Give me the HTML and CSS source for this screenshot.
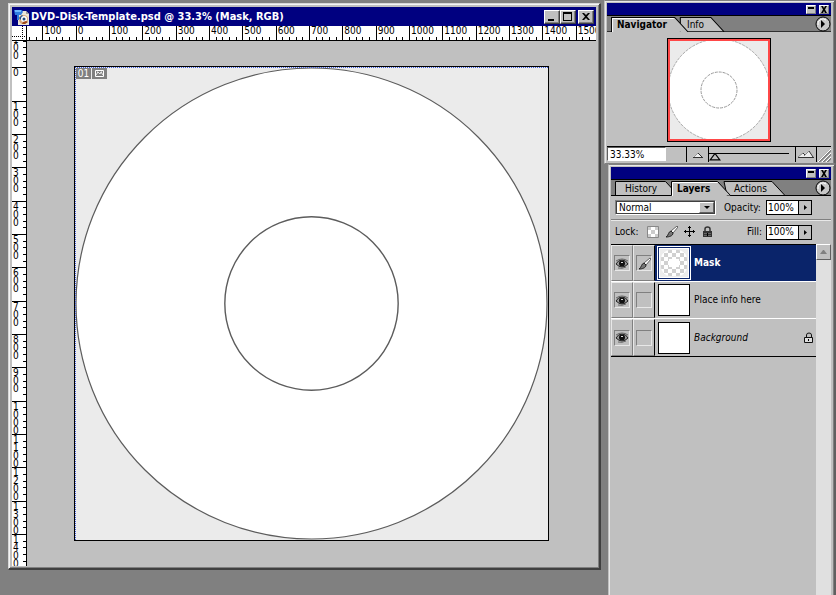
FILE: index.html
```html
<!DOCTYPE html>
<html lang="en">
<head>
<meta charset="utf-8">
<title>DVD-Disk-Template.psd</title>
<link rel="stylesheet" href="styles.css">
</head>
<body>
<main class="desktop">
  <section class="doc">
    <header class="titlebar">
      <svg class="app-icon" width="16" height="16" viewBox="0 0 16 16" aria-hidden="true">
        <path d="M4 2h8l3 3v11H4z" fill="#e8e4d8"/><path d="M12 2v3h3z" fill="#9a9a9a"/>
        <path d="M0 1h8l1 2-2 3H5v5H3V6H1z" fill="#2f7de0"/><path d="M1 1h6v2H1z" fill="#70b8ff"/>
        <path d="M5 10q0-4 4-4 5 0 5 4 0 5-5 5-4 0-4-5z" fill="#d8a878"/><path d="M5 9l3-3 2 2-3 3z" fill="#205090"/><circle cx="10" cy="10" r="3" fill="#fff"/><circle cx="10" cy="10" r="1.500" fill="#204878"/><path d="M12 12l2 1-3 2H8l1-2z" fill="#a04818"/>
      </svg>
      <h1>DVD-Disk-Template.psd @ 33.3% (Mask, RGB)</h1>
      <div class="win-buttons">
        <button type="button" aria-label="Minimize"><svg width="12" height="10" viewBox="0 0 12 10"><path d="M2 7h6v2H2z"/></svg></button>
        <button type="button" aria-label="Maximize"><svg width="12" height="10" viewBox="0 0 12 10"><path fill-rule="evenodd" d="M1 0h9v9H1zM2 2v6h7V2z"/></svg></button>
        <button type="button" class="close" aria-label="Close"><svg width="12" height="10" viewBox="0 0 12 10"><path d="M2 1h2l2 2 2-2h2L7 4.500l3 3.500H8L6 6 4 8H2l3-3.500z"/></svg></button>
      </div>
    </header>
    <div class="workspace">
      <div class="corner"></div>
      <div class="ruler ruler-h"><div class="scale" data-first="-200" data-last="1500"></div></div>
      <div class="ruler ruler-v"><div class="scale" data-first="-100" data-last="1400"></div></div>
      <div class="stage">
        <div class="canvas">
          <svg class="disc" viewBox="0 0 472 472" role="img" aria-label="Disc template">
            <circle cx="236" cy="236" r="235" fill="#fff" stroke="#5c5c5c" stroke-width="1.200"/>
            <circle cx="236" cy="236" r="86.500" fill="#fff" stroke="#5c5c5c" stroke-width="1.400"/>
          </svg>
          <div class="slice"><span>01</span><span><svg width="11" height="9" viewBox="0 0 11 9"><path d="M1.500 1.500h8v6h-8z" fill="none" stroke="#fff"/><path d="M2 6l2-3 2 2 1-2 2 3M3 3h1M7 3h1" fill="none" stroke="#fff" stroke-width=".8"/></svg></span></div>
        </div>
      </div>
    </div>
  </section>

  <aside class="panels">
    <section class="panel navigator">
      <header class="palette-bar">
        <button type="button" aria-label="Minimize navigator"><svg width="8" height="7" viewBox="0 0 8 7"><path d="M1 1h6v2H1z"/></svg></button>
        <button type="button" aria-label="Close navigator"><svg width="8" height="7" viewBox="0 0 8 7"><path d="M1 0h2l1 2 1-2h2L5 3.500 7 7H5L4 5 3 7H1l2-3.500z"/></svg></button>
      </header>
      <nav class="tabs">
        <svg class="tab-art" height="16" viewBox="0 0 220 16" preserveAspectRatio="xMinYMin slice" aria-hidden="true"><path d="M72 15.500V1.500h30l13 14" fill="#c0c0c0" stroke="#000"/><path d="M0 15.500h4.500v-14h62l13 14" fill="#c0c0c0"/><path d="M0 15.500h4.500v-14h62l13 14H230" fill="none" stroke="#000"/><path d="M5.500 16V2.500h60" fill="none" stroke="#fff"/></svg>
        <button type="button" class="tab active t-nav">Navigator</button>
        <button type="button" class="tab t-info">Info</button>
        <button type="button" class="more" aria-label="Navigator menu"><svg width="16" height="16" viewBox="0 0 16 16"><circle cx="8" cy="8" r="7" fill="#c8c8c8" stroke="#000"/><path d="M3 9a5 5 0 0 1 8-5" stroke="#fff" fill="none"/><path d="M6 4l4 4-4 4z"/></svg></button>
      </nav>
      <div class="preview">
        <svg width="104" height="104" viewBox="0 0 104 104" role="img" aria-label="Navigator preview"><path d="M0 0h104v104H0z" fill="#000"/><path d="M1 1h102v102H1z" fill="#ff4848"/><svg x="3" y="3" width="98" height="98" viewBox="0 0 98 98"><path d="M0 0h98v98H0z" fill="#ebebeb"/><circle cx="49" cy="49" r="51" fill="#fff" stroke="#aaa" stroke-dasharray="3 1"/><circle cx="49" cy="49" r="18" fill="none" stroke="#999" stroke-dasharray="3 1"/></svg></svg>
      </div>
      <footer class="zoom-row">
        <input class="zoom-value" type="text" value="33.33%" aria-label="Zoom">
        <button type="button" class="zoom-out" aria-label="Zoom out"><svg width="12" height="8" viewBox="0 0 12 8"><path d="M1 6l3-2 2-2 4 4z" fill="#eee"/><path d="M1 6.500h10M6 2l4 4" fill="none" stroke="#333"/><path d="M2 6l2-2 2-2" fill="none" stroke="#999"/></svg></button>
        <label class="slider"><input type="range" min="0" max="100" value="0" aria-label="Zoom level"></label>
        <button type="button" class="zoom-in" aria-label="Zoom in"><svg width="18" height="10" viewBox="0 0 18 10"><path d="M1 7l5-4 2 1 4-3 4 6z" fill="#eee"/><path d="M1 7.500h16M12 1l4 6M6 3l2 2" fill="none" stroke="#333"/><path d="M1 7l5-4M7 6l5-5" fill="none" stroke="#888"/></svg></button>
        <svg class="grip" width="13" height="13" viewBox="0 0 13 13" aria-hidden="true"><path d="M1 13L13 1M5 13l8-8M9 13l4-4" stroke="#808080" stroke-width="2"/><path d="M0 13L13 0M4 13l9-9M8 13l5-5" stroke="#fff"/></svg>
      </footer>
    </section>

    <section class="panel layers">
      <header class="palette-bar">
        <button type="button" aria-label="Minimize layers"><svg width="8" height="7" viewBox="0 0 8 7"><path d="M1 1h6v2H1z"/></svg></button>
        <button type="button" aria-label="Close layers"><svg width="8" height="7" viewBox="0 0 8 7"><path d="M1 0h2l1 2 1-2h2L5 3.500 7 7H5L4 5 3 7H1l2-3.500z"/></svg></button>
      </header>
      <nav class="tabs">
        <svg class="tab-art" height="16" viewBox="0 0 220 16" preserveAspectRatio="xMinYMin slice" aria-hidden="true"><path d="M4.500 15.500V1.500h50l13 14M113 1.500h48l13 14H116z" fill="#c0c0c0" stroke="#000"/><path d="M60.500 16V1.500h46l13 14z" fill="#c0c0c0"/><path d="M0 15.500h60.500v-14h46l13 14H230" fill="none" stroke="#000"/><path d="M61.500 16V2.500h45" fill="none" stroke="#fff"/></svg>
        <button type="button" class="tab t-history">History</button>
        <button type="button" class="tab active t-layers">Layers</button>
        <button type="button" class="tab t-actions">Actions</button>
        <button type="button" class="more" aria-label="Layers menu"><svg width="16" height="16" viewBox="0 0 16 16"><circle cx="8" cy="8" r="7" fill="#c8c8c8" stroke="#000"/><path d="M3 9a5 5 0 0 1 8-5" stroke="#fff" fill="none"/><path d="M6 4l4 4-4 4z"/></svg></button>
      </nav>
      <div class="options blend">
        <div class="select-box"><select aria-label="Blend mode"><option>Normal</option></select><span class="drop"></span></div>
        <label for="opacity">Opacity:</label>
        <div class="percent"><input id="opacity" type="text" value="100%"><button type="button" aria-label="Opacity slider"><svg width="3" height="5" viewBox="0 0 3 5"><path d="M0 0l3 2.500L0 5z"/></svg></button></div>
      </div>
      <div class="options lock">
        <span class="lock-label">Lock:</span>
        <button type="button" class="tool" aria-label="Lock transparency"><svg width="12" height="12" viewBox="0 0 12 12"><path d="M0 0h11v11H0z" fill="#fff"/><path d="M0 0h4v4H0zM8 0h3v4H8zM4 4h4v4H4zM0 8h4v3H0zM8 8h3v3H8z" fill="#ccc"/><path d="M.5 11.500V.500h11v11z" stroke="#888" fill="none"/></svg></button>
        <button type="button" class="tool" aria-label="Lock pixels"><svg width="13" height="12" viewBox="0 0 13 12"><path d="M12 0L6 5l2 2 5-6z" fill="#fff" stroke="#444" stroke-width=".8"/><path d="M6 5l2 2c0 3-4 4-7 4 3-2 2-5 5-6z" fill="#777" stroke="#222"/></svg></button>
        <button type="button" class="tool" aria-label="Lock position"><svg width="12" height="12" viewBox="0 0 12 12"><path d="M5.500 0v11M0 5.500h11M4 2l1.500-1.500L7 2M4 9l1.500 1.500L7 9M2 4L.5 5.500 2 7M9 4l1.500 1.500L9 7" stroke="#000" fill="none"/></svg></button>
        <button type="button" class="tool" aria-label="Lock all"><svg width="11" height="12" viewBox="0 0 11 12"><path d="M3 5V3q0-2 2.500-2T8 3v2" fill="none" stroke="#333" stroke-width="1.500"/><path d="M1 5h9v6H1z" fill="#333"/><path d="M2 7.500h7M2 9.500h7" stroke="#666"/><path d="M5 7h1v3H5z"/></svg></button>
        <label class="fill-label" for="fill">Fill:</label>
        <div class="percent"><input id="fill" type="text" value="100%"><button type="button" aria-label="Fill slider"><svg width="3" height="5" viewBox="0 0 3 5"><path d="M0 0l3 2.500L0 5z"/></svg></button></div>
      </div>
      <div class="layer-area">
        <ul class="layer-list">
          <li class="layer selected">
            <span class="slot"><button type="button" class="cell" aria-label="Hide Mask"><svg width="14" height="11"><use href="#eye"/></svg></button></span>
            <span class="slot"><span class="cell"><svg width="13" height="13" viewBox="0 0 13 13"><path d="M12 1L6 6l2 2 5-6z" fill="#fff" stroke="#444" stroke-width=".8"/><path d="M6 6l2 2c0 3-4 4-7 4 3-2 2-5 5-6z" fill="#777" stroke="#222"/></svg></span></span>
            <span class="thumb"><svg width="28" height="28" viewBox="0 0 28 28"><defs><pattern id="check" width="8" height="8" patternUnits="userSpaceOnUse"><path d="M0 0h8v8H0z" fill="#fff"/><path d="M0 0h4v4H0zM4 4h4v4H4z" fill="#d0d0d0"/></pattern></defs><path d="M0 0h28v28H0z" fill="#ececec"/><rect x="1" y="1" width="26" height="26" rx="9" fill="url(#check)"/><rect x="9" y="10" width="10" height="8" fill="#fff"/></svg></span>
            <span class="name">Mask</span>
          </li>
          <li class="layer">
            <span class="slot"><button type="button" class="cell" aria-label="Hide Place info here"><svg width="14" height="11"><use href="#eye"/></svg></button></span>
            <span class="slot"><span class="cell"></span></span><span class="thumb"></span><span class="name">Place info here</span>
          </li>
          <li class="layer background">
            <span class="slot"><button type="button" class="cell" aria-label="Hide Background"><svg width="14" height="11"><use href="#eye"/></svg></button></span>
            <span class="slot"><span class="cell"></span></span><span class="thumb"></span><span class="name">Background</span>
            <svg class="padlock" width="10" height="12" viewBox="0 0 10 12"><path d="M2.500 5V3q0-2 2.500-2t2.500 2v2" fill="none" stroke="#111"/><path d="M.5 5.500h8v5h-8z" fill="#ddd" stroke="#111"/><path d="M4 7h1v2H4z"/></svg>
          </li>
        </ul>
        <div class="scrollbar"><button type="button" aria-label="Scroll up"><svg width="7" height="4" viewBox="0 0 7 4"><path d="M3 0h1l3 4H0z" fill="#808080"/></svg></button></div>
      </div>
    </section>
  </aside>
</main>
<svg class="symbols" aria-hidden="true"><symbol id="eye" viewBox="0 0 14 11"><path d="M1 6q2-4 6-4t6 4q-3 3-6 3T1 6z" fill="#999" stroke="#222"/><circle cx="7" cy="5.500" r="3" fill="#111"/><path d="M6 4h2v1H6z" fill="#ddd"/><path d="M1 3q6-4 12 0M3 10q4 1 8-1" fill="none" stroke="#666"/></symbol></svg>
<script src="rulers.js"></script>
</body>
</html>
```
FILE: styles.css
```css
* { box-sizing: border-box; }
body { margin: 0; background: #808080; color: #000; font: 10px/12px "DejaVu Sans Condensed", "DejaVu Sans", sans-serif; }
button, input, select { margin: 0; padding: 0; border: 0; border-radius: 0; background: none; color: inherit; font: inherit; }
button svg, .cell svg, .thumb svg { display: block; }
.symbols { position: absolute; width: 0; height: 0; }
.desktop { display: grid; grid-template: minmax(0, 1fr) / minmax(0, 1fr) 232px; column-gap: 3px; height: 100vh; padding-left: 8px; }

.doc { display: flex; flex-direction: column; min-height: 0; margin: 3px 0 25px; padding: 2px; background: #c0c0c0; border: 1px solid #d8d8d8; border-right: 2px solid #404040; border-bottom: 2px solid #404040; box-shadow: inset 1px 1px #f4f4f4, inset -1px -1px #808080; }
.titlebar { display: flex; align-items: center; height: 19px; padding: 0 2px; margin: 1px 1px 0; background: #000080; color: #fff; }
.titlebar h1 { flex: 1; margin: 0 0 0 1px; font-size: 11px; line-height: 18px; white-space: nowrap; }
.win-buttons { display: flex; color: #000; }
.win-buttons button { display: flex; justify-content: center; align-items: center; width: 16px; height: 14px; background: #c0c0c0; border: 1px solid; border-color: #fff #404040 #404040 #fff; box-shadow: inset -1px -1px #808080; }
.win-buttons .close { margin-left: 2px; }

.workspace { flex: 1; min-height: 0; display: grid; grid-template: 15px minmax(0, 1fr) / 15px minmax(0, 1fr); margin: 0 1px; }
.corner { background: repeating-linear-gradient(#000 0 1px, #fff 1px 2px) 10px 0 / 1px 100% no-repeat, repeating-linear-gradient(90deg, #000 0 1px, #fff 1px 2px) 0 10px / 100% 1px no-repeat, #fff; border-right: 1px solid #000; border-bottom: 1px solid #000; }
.ruler { overflow: hidden; background: #fff; line-height: 8px; }
.ruler-h { border-bottom: 1px solid #000; }
.ruler-v { border-right: 1px solid #000; }
.scale { display: grid; }
.ruler-h .scale { grid-template-columns: repeat(18, 1fr); width: 600px; height: 14px; margin-left: -18px; }
.ruler-v .scale { grid-template-rows: repeat(18, 1fr); height: 600px; margin-top: -7px; }
.mark { position: relative; min-width: 0; min-height: 0; }
.ruler-h .mark { border-left: 1px solid #000; }
.ruler-v .mark { border-top: 1px solid #000; }
.mark b { position: absolute; font-weight: normal; }
.ruler-h .mark:first-child b { display: none; }
.ruler-h b { left: 1px; top: 1px; }
.ruler-v b { left: 1px; top: 1px; width: 7px; word-break: break-all; }
.ticks { position: absolute; display: flex; }
.ticks i { flex: 1; }
.ruler-h .ticks { inset: auto 0 0 -1px; height: 3px; }
.ruler-h .ticks i { border-left: 1px solid #000; }
.ruler-v .ticks { inset: -1px 0 0 auto; width: 3px; flex-direction: column; }
.ruler-v .ticks i { border-top: 1px solid #000; }
.stage { overflow: hidden; padding: 25px 0 0 47px; background: #c0c0c0; }
.canvas { position: relative; width: 475px; aspect-ratio: 1; background: #ebebeb; border: 1px solid #000; }
.canvas::before { content: ""; position: absolute; inset: 0; border-left: 1px dotted #4060e0; border-top: 1px dotted #4060e0; }
.disc { display: block; width: 100%; height: 100%; }
.slice { position: absolute; left: 1px; top: 1px; display: flex; gap: 1px; color: #fff; line-height: 11px; }
.slice span { display: flex; align-items: center; justify-content: center; width: 15px; height: 11px; background: #808080; }

.panels { display: flex; flex-direction: column; }
.panel { background: #c0c0c0; border: 1px solid #808080; border-left-color: #c0c0c0; border-right: 2px solid #606060; box-shadow: inset 1px 1px #e8e8e8, inset -1px 0 #808080; }
.navigator { height: 164px; padding: 2px 3px 0 2px; }
.layers { flex: 1; display: flex; flex-direction: column; margin-left: 4px; padding: 2px 3px 0 2px; border-bottom: 0; }
.palette-bar { display: flex; justify-content: flex-end; align-items: center; gap: 3px; height: 12px; padding-right: 2px; background: #000080; }
.palette-bar button { display: flex; align-items: center; justify-content: center; width: 10px; height: 9px; background: #c0c0c0; border: 1px solid; border-color: #fff #808080 #808080 #fff; }
.tabs { display: flex; position: relative; height: 17px; background: linear-gradient(#808080 15px, #c0c0c0 15px); border-top: 1px solid #000; }
.tab-art { position: absolute; left: 0; top: 0; width: 100%; }
.tab { position: relative; text-align: left; line-height: 15px; }
.tab.active { font-weight: bold; }
.t-nav { width: 69px; padding-left: 10px; }
.t-info { padding-left: 11px; }
.t-history { width: 56px; padding-left: 14px; }
.t-layers { width: 56px; padding-left: 10px; }
.t-actions { padding-left: 11px; }
.more { position: relative; margin-left: auto; }
.preview { display: flex; justify-content: center; padding: 6px 1px 4px 0; }
.zoom-row { display: flex; height: 16px; border-top: 1px solid #000; }
.zoom-value { width: 59px; height: 14px; margin-right: 20px; padding-left: 2px; background: #fff; border: 1px solid #606060; border-right-color: #fff; border-bottom-color: #fff; }
.zoom-out, .slider, .zoom-in { display: flex; align-items: center; justify-content: center; border-left: 1px solid #000; }
.zoom-out { width: 22px; }
.slider { flex: 1; padding-right: 6px; }
.zoom-in { width: 22px; border-right: 1px solid #000; }
.slider input { appearance: none; width: 100%; height: 12px; background: linear-gradient(#000, #000) 0 4px / 100% 1px no-repeat; }
.slider input::-webkit-slider-thumb { appearance: none; width: 12px; height: 8px; margin-top: 4px; background: linear-gradient(#000, #000); clip-path: polygon(50% 0, 100% 100%, 0 100%, 50% 0, 50% 25%, 20% 85%, 80% 85%, 50% 25%); }
.grip { flex: none; margin: 2px 0 0 1px; }

.options { display: flex; align-items: center; height: 24px; padding: 0 19px 0 4px; }
.blend { border-bottom: 1px solid #808080; box-shadow: 0 1px #e8e8e8; }
.select-box { position: relative; width: 101px; height: 15px; margin-right: 8px; border: 1px solid; border-color: #808080 #fff #fff #808080; }
.select-box select { appearance: none; display: block; width: 100%; height: 13px; padding-left: 2px; background: #fff; border: 1px solid #404040; }
.drop { position: absolute; right: 1px; top: 1px; width: 15px; height: 11px; background: #c0c0c0; border: 1px solid; border-color: #fff #606060 #606060 #fff; pointer-events: none; }
.drop::after { content: ""; position: absolute; left: 4px; top: 3px; border: 3px solid transparent; border-top-color: #000; border-bottom: 0; }
.percent { display: flex; width: 46px; height: 15px; margin-left: auto; border: 1px solid #000; }
.percent input { width: 31px; padding-left: 1px; background: #fff; }
.percent button { flex: 1; display: flex; align-items: center; justify-content: center; border-left: 1px solid #000; }
.lock-label { width: 32px; }
.tool { margin-right: 6px; }
.fill-label { margin-left: 28px; }
.layer-area { flex: 1; display: flex; }
.layer-list { flex: 1; align-self: flex-start; margin: 0; padding: 0; list-style: none; border-top: 1px solid #000; border-bottom: 1px solid #000; }
.layer { display: flex; align-items: center; height: 37px; border-bottom: 1px solid #fff; }
.layer:last-child { border-bottom: 0; }
.slot { display: flex; align-items: center; justify-content: center; align-self: stretch; width: 22px; border: 1px solid; border-color: #e8e8e8 #808080 #808080 #e8e8e8; }
.slot + .slot { border-right-color: #000; }
.cell { display: flex; align-items: center; justify-content: center; width: 16px; height: 16px; border: 1px solid; border-color: #808080 #e8e8e8 #e8e8e8 #808080; }
.thumb { display: flex; align-items: center; justify-content: center; width: 32px; height: 32px; margin: 0 4px 0 3px; background: #fff; border: 1px solid #000; }
.selected { background: linear-gradient(90deg, #c0c0c0 44px, #0a246a 44px); }
.selected .thumb { border-color: #0a246a; outline: 1px solid #fff; }
.selected .name { color: #fff; font-weight: bold; }
.background .name { font-style: italic; }
.padlock { margin: 0 2px 0 auto; }
.scrollbar { width: 15px; background: #e0e0e0; }
.scrollbar button { display: flex; align-items: center; justify-content: center; width: 15px; height: 16px; background: #c0c0c0; border: 1px solid; border-color: #fff #606060 #606060 #fff; }
```
FILE: rulers.js
```js
document.querySelectorAll(".scale").forEach(function (scale) {
  const last = Number(scale.dataset.last);
  for (let value = Number(scale.dataset.first); value <= last; value += 100) {
    const mark = document.createElement("div");
    mark.className = "mark";
    const label = document.createElement("b");
    label.textContent = Math.abs(value);
    const ticks = document.createElement("div");
    ticks.className = "ticks";
    for (let n = 0; n < 5; n++) ticks.append(document.createElement("i"));
    mark.append(label, ticks);
    scale.append(mark);
  }
});
```
